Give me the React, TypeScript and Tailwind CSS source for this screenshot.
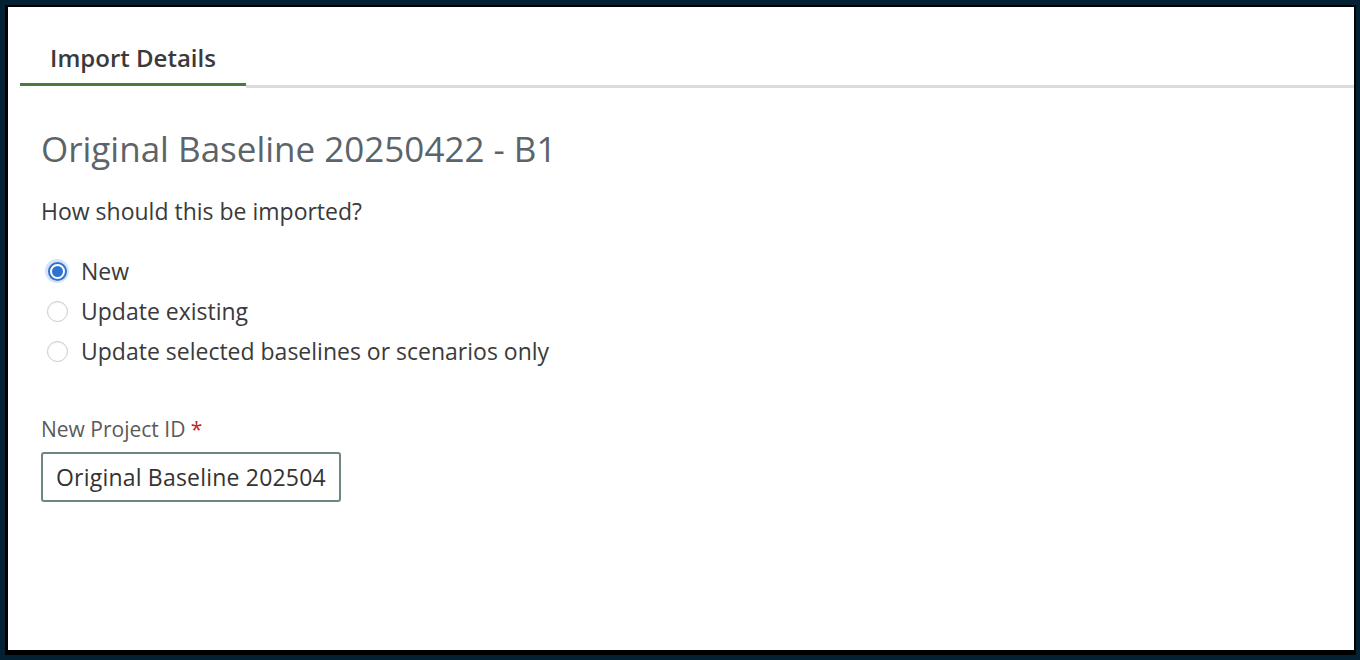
import React from "react";

function Radio({ checked, label }: { checked?: boolean; label: string }) {
  return (
    <div className="flex items-center h-[40px]">
      <div className="w-[34px] flex items-center justify-center ml-[7px]">
        {checked ? (
          <div className="w-[24px] h-[24px] rounded-full bg-[#d3e4f8] flex items-center justify-center">
            <div className="w-[19px] h-[19px] rounded-full border-[2px] border-[#2f73d0] bg-white flex items-center justify-center">
              <div className="w-[11px] h-[11px] rounded-full bg-[#2f73d0]" />
            </div>
          </div>
        ) : (
          <div className="w-[21px] h-[21px] rounded-full border border-[#cacaca] bg-white shadow-[inset_0_1px_1px_rgba(0,0,0,0.06)]" />
        )}
      </div>
      <span className="ml-[7px] text-[23px] text-[#3a3a3a] leading-[30px]">{label}</span>
    </div>
  );
}

export default function App() {
  return (
    <div
      className="w-[1360px] h-[660px] bg-[#042133] pt-[5px] pl-[5px] pr-[4px] pb-[5px]"
      style={{ fontFamily: '"Open Sans", "Noto Sans", sans-serif' }}
    >
      <div className="w-full h-full bg-white border-l-[3px] border-t-[2px] border-r-[2px] border-b-[5px] border-black">
        <div className="pt-[35px] flex items-end">
          <div className="ml-[12px] w-[226px] flex flex-col items-center">
            <div className="text-[24px] font-semibold text-[#3a3a3a] leading-[32px]">Import Details</div>
            <div className="mt-[9px] w-full h-[3px] bg-[#4a7a3e]" />
          </div>
          <div className="flex-1 h-[3px] mb-[-2px] bg-[#dcdcdc]" />
        </div>
        <div className="pl-[33px]">
          <h1 className="mt-[43px] text-[35px] font-normal text-[#5b6468] leading-[40px]">
            Original Baseline 20250422 - B1
          </h1>
          <div className="mt-[27px] text-[23px] text-[#3a3a3a] leading-[30px]">How should this be imported?</div>
          <div className="mt-[25px] ml-[-8px]">
            <Radio checked label="New" />
            <Radio label="Update existing" />
            <Radio label="Update selected baselines or scenarios only" />
          </div>
          <div className="mt-[44px] text-[21px] text-[#5a5a5a] leading-[28px]">
            New Project ID <span className="text-[#c0281e]">*</span>
          </div>
          <div className="mt-[9px] w-[300px] h-[50px] border-[2px] border-[#6f8585] rounded-[3px] flex items-center pl-[13px] overflow-hidden">
            <span className="text-[23px] text-[#333] whitespace-nowrap tracking-[0.2px]">Original Baseline 202504</span>
          </div>
        </div>
      </div>
    </div>
  );
}
